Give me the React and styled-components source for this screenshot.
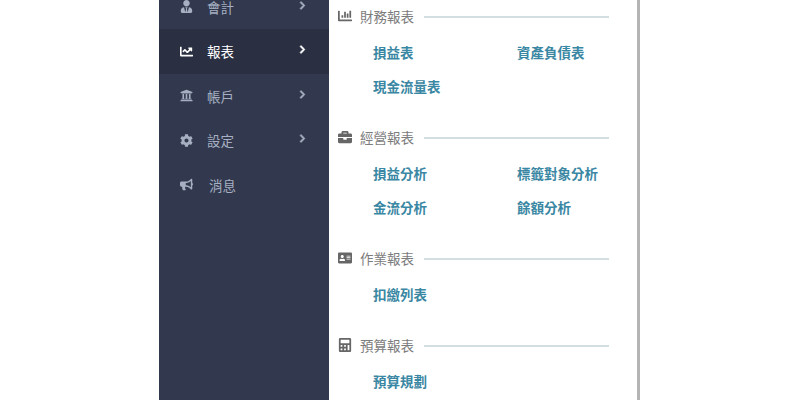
import styled, { createGlobalStyle } from 'styled-components';
import {
  FaUserTie,
  FaChartLine,
  FaUniversity,
  FaCog,
  FaBullhorn,
  FaChevronRight,
  FaChartBar,
  FaBriefcase,
  FaAddressCard,
  FaCalculator,
} from 'react-icons/fa';

const MENU = [
  { label: '會計', icon: FaUserTie, arrow: true },
  { label: '報表', icon: FaChartLine, arrow: true, active: true },
  { label: '帳戶', icon: FaUniversity, arrow: true },
  { label: '設定', icon: FaCog, arrow: true },
  { label: '消息', icon: FaBullhorn, offset: true },
];

const GROUPS = [
  { title: '財務報表', icon: FaChartBar, links: ['損益表', '資產負債表', '現金流量表'] },
  { title: '經營報表', icon: FaBriefcase, links: ['損益分析', '標籤對象分析', '金流分析', '餘額分析'] },
  { title: '作業報表', icon: FaAddressCard, links: ['扣繳列表'] },
  { title: '預算報表', icon: FaCalculator, links: ['預算規劃'] },
];

const GlobalStyle = createGlobalStyle`
  html, body {
    margin: 0;
    height: 100%;
    overflow: hidden;
    background: #fff;
  }
  #root {
    height: 100%;
  }
`;

export default function App() {
  return (
    <>
      <GlobalStyle />
      <Page>
        <Sidebar>
          {MENU.map((item) => (
            <MenuItem key={item.label} $active={item.active}>
              <MenuIcon>
                <item.icon size={13} />
              </MenuIcon>
              <MenuLabel $offset={item.offset}>{item.label}</MenuLabel>
              {item.arrow && (
                <MenuArrow>
                  <FaChevronRight size={9} />
                </MenuArrow>
              )}
            </MenuItem>
          ))}
        </Sidebar>
        <Panel>
          {GROUPS.map((group) => (
            <Group key={group.title}>
              <GroupHeader>
                <GroupIcon>
                  <group.icon size={14} />
                </GroupIcon>
                <GroupTitle>{group.title}</GroupTitle>
                <GroupRule />
              </GroupHeader>
              <LinkGrid>
                {group.links.map((link) => (
                  <ReportLink key={link}>{link}</ReportLink>
                ))}
              </LinkGrid>
            </Group>
          ))}
        </Panel>
      </Page>
    </>
  );
}

const Page = styled.div`
  display: flex;
  height: 100%;
  padding-left: 159px;
  font-family: "Noto Sans CJK TC", "Noto Sans", sans-serif;
  overflow: hidden;
`;

const Sidebar = styled.nav`
  width: 170px;
  flex: none;
  background: #32394e;
  margin-top: -15.5px;
  height: 415.5px;
`;

const MenuItem = styled.div`
  display: flex;
  align-items: center;
  height: 44.5px;
  padding-left: 21px;
  background: ${(p) => (p.$active ? '#2a3042' : 'transparent')};
  color: ${(p) => (p.$active ? '#ffffff' : '#a6b0c2')};
`;

const MenuIcon = styled.span`
  display: flex;
  justify-content: center;
  width: 13px;
`;

const MenuLabel = styled.span`
  font-size: 13.5px;
  line-height: 20px;
  margin-left: ${(p) => (p.$offset ? '16px' : '14px')};
`;

const MenuArrow = styled.span`
  display: flex;
  margin-left: 64px;
  margin-top: -3px;

  svg {
    stroke: currentColor;
    stroke-width: 40;
  }
`;

const Panel = styled.main`
  flex: none;
  box-sizing: border-box;
  width: 311px;
  height: 100%;
  padding: 6px 28px 0 9px;
  border-right: 3px solid #b4b4b4;
`;

const Group = styled.section`
  margin-bottom: 24.5px;
`;

const GroupHeader = styled.div`
  display: flex;
  align-items: center;
  height: 20px;
  color: #666;
`;

const GroupIcon = styled.span`
  display: flex;
  justify-content: center;
  width: 14px;
`;

const GroupTitle = styled.span`
  font-size: 13.5px;
  line-height: 20px;
  margin-left: 8px;
  color: #7d7d7d;
`;

const GroupRule = styled.span`
  flex: 1;
  height: 2px;
  margin: 1px 0 0 10px;
  background: #d3dee2;
`;

const LinkGrid = styled.div`
  display: grid;
  grid-template-columns: 144px 1fr;
  grid-auto-rows: 34px;
  padding: 8.5px 0 0 35px;
`;

const ReportLink = styled.a`
  font-size: 13.5px;
  font-weight: 700;
  line-height: 34px;
  color: #3a87a3;
  white-space: nowrap;
`;
